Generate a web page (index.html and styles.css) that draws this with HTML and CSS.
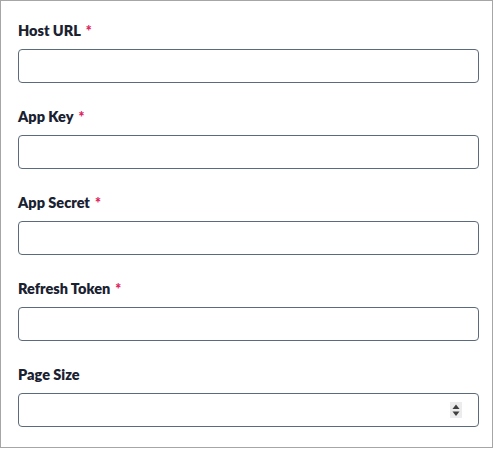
FILE: index.html
```html
<!DOCTYPE html>
<html>
<head>
<meta charset="utf-8">
<link rel="stylesheet" href="styles.css">
</head>
<body>
<div class="panel">
  <div class="field">
    <label class="label">Host URL<span class="req">*</span></label>
    <div class="input"></div>
  </div>
  <div class="field">
    <label class="label">App Key<span class="req">*</span></label>
    <div class="input"></div>
  </div>
  <div class="field">
    <label class="label">App Secret<span class="req">*</span></label>
    <div class="input"></div>
  </div>
  <div class="field">
    <label class="label">Refresh Token<span class="req">*</span></label>
    <div class="input"></div>
  </div>
  <div class="field">
    <label class="label">Page Size</label>
    <div class="input number">
      <span class="spin">
        <svg width="12" height="16" viewBox="0 0 12 16"><path d="M6 2.5 L9.5 7 L2.5 7 Z" fill="#3f3f3f"/><path d="M2.5 9.5 L9.5 9.5 L6 14 Z" fill="#3f3f3f"/></svg>
      </span>
    </div>
  </div>
</div>
</body>
</html>
```
FILE: styles.css
```css
html, body {
  margin: 0;
  padding: 0;
  background: #fff;
}
.panel {
  box-sizing: border-box;
  width: 493px;
  height: 448px;
  border: 1px solid #a6a6a6;
  padding: 18px 14px 20px 17px;
  display: flex;
  flex-direction: column;
  gap: 22px;
  font-family: Lato, "Noto Sans", sans-serif;
}
.field {
  display: flex;
  flex-direction: column;
  gap: 10px;
}
.label {
  display: block;
  box-sizing: border-box;
  height: 20px;
  padding-top: 2px;
  font-size: 14.5px;
  line-height: 20px;
  font-weight: 800;
  color: #1a2130;
}
.req {
  color: #e0245e;
  font-size: 14px;
  line-height: 0;
  margin-left: 5px;
}
.input {
  box-sizing: border-box;
  height: 34px;
  width: 461px;
  border: 1px solid #5b6b7b;
  border-radius: 4px;
  display: flex;
  align-items: center;
  justify-content: flex-end;
  padding-right: 16px;
}
.spin {
  display: flex;
  width: 12px;
  height: 16px;
  background: #ececec;
}
```
